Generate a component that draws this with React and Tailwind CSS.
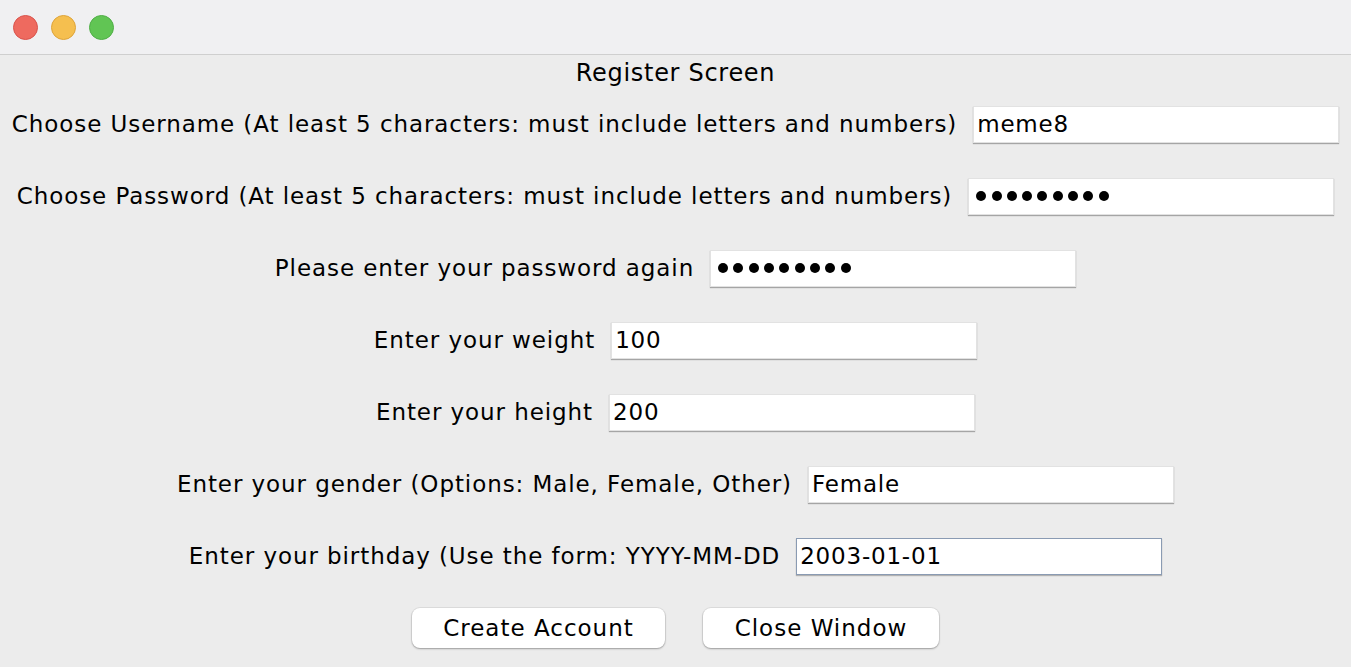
const font = { fontFamily: '"DejaVu Sans", "Liberation Sans", sans-serif' };

const Dots = () => (
  <div className="ml-[4px] flex gap-[5.3px]">
    {Array.from({ length: 9 }).map((_, i) => (
      <span key={i} className="h-[10px] w-[10px] rounded-full bg-black" />
    ))}
  </div>
);

const Field = ({ value, secret, focused }) => (
  <div
    className={`flex h-[37px] w-[366px] items-center bg-white pl-[3px] text-[23px] tracking-[0.8px] text-black ${
      focused
        ? 'border border-[#8a9bb3] shadow-[0_1px_1px_rgba(0,0,0,0.25)]'
        : 'border border-[#e2e2e2] shadow-[0_1px_1px_rgba(0,0,0,0.3)]'
    }`}
  >
    {secret ? <Dots /> : value}
  </div>
);

const Row = ({ label, children }) => (
  <div className="flex h-[72px] items-center justify-center gap-[16px]">
    <span className="whitespace-nowrap text-[23px] tracking-[0.92px] text-black">{label}</span>
    {children}
  </div>
);

const Button = ({ children, width }) => (
  <button
    className={`h-[40px] ${width} rounded-[8px] bg-white text-[23px] tracking-[1px] text-black shadow-[0_0_0_1px_rgba(0,0,0,0.06),0_1px_2px_rgba(0,0,0,0.3)]`}
  >
    {children}
  </button>
);

export default function App() {
  return (
    <div className="h-[667px] w-[1351px] overflow-hidden bg-[#ececec]" style={font}>
      <div className="flex h-[55px] items-center gap-[13px] border-b border-[#cfcfcf] bg-[#f0f0f2] pl-[13px]">
        <span className="h-[25px] w-[25px] rounded-full border border-[#d9534c] bg-[#ee6a5f]" />
        <span className="h-[25px] w-[25px] rounded-full border border-[#dea43a] bg-[#f5bf4f]" />
        <span className="h-[25px] w-[25px] rounded-full border border-[#4fae46] bg-[#61c554]" />
      </div>

      <div className="flex h-[33px] items-center justify-center pt-[2px] text-[24px] tracking-[0.7px] text-black">
        Register Screen
      </div>

      <Row label="Choose Username (At least 5 characters: must include letters and numbers)">
        <Field value="meme8" />
      </Row>
      <Row label="Choose Password (At least 5 characters: must include letters and numbers)">
        <Field secret />
      </Row>
      <Row label="Please enter your password again">
        <Field secret />
      </Row>
      <Row label="Enter your weight">
        <Field value="100" />
      </Row>
      <Row label="Enter your height">
        <Field value="200" />
      </Row>
      <Row label="Enter your gender (Options: Male, Female, Other)">
        <Field value="Female" />
      </Row>
      <Row label="Enter your birthday (Use the form: YYYY-MM-DD">
        <Field value="2003-01-01" focused />
      </Row>

      <div className="flex h-[72px] items-center justify-center gap-[38px]">
        <Button width="w-[253px]">Create Account</Button>
        <Button width="w-[236px]">Close Window</Button>
      </div>
    </div>
  );
}
